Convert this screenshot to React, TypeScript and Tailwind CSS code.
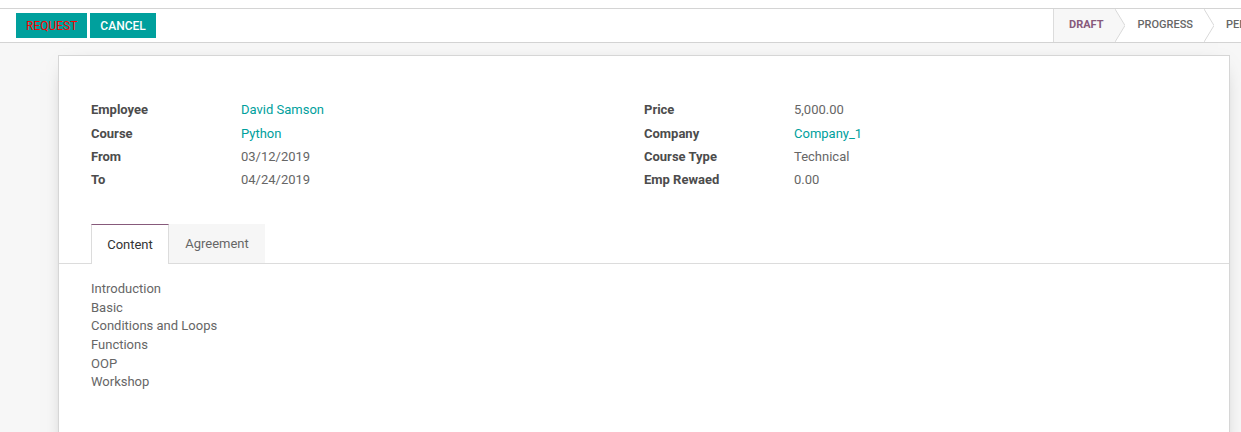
import React from "react";

function Arrow({ fill }: { fill?: string }) {
  return (
    <svg width="10" height="33" viewBox="0 0 10 33" className="block shrink-0">
      {fill ? <polygon points="0,0 10,16.5 0,33" fill={fill} /> : null}
      <polyline points="0,0 10,16.5 0,33" fill="none" stroke="#d9d9d9" strokeWidth="1" />
    </svg>
  );
}

function Row({ label, value, link }: { label: string; value: string; link?: boolean }) {
  return (
    <div className="grid grid-cols-[150px_1fr] h-[23.33px] items-center">
      <div className="font-bold text-[#4c4c4c]">{label}</div>
      <div className={link ? "text-[#00A09D]" : "text-[#666666]"}>{value}</div>
    </div>
  );
}

export default function App() {
  return (
    <div className="w-[1241px] h-[432px] overflow-hidden bg-white font-['Roboto',sans-serif] text-[13px] leading-[18.57px]">
      <div className="h-[8px] bg-white" />
      <div className="h-[35px] border-t border-b border-[#d4d4d4] bg-white flex items-center">
        <div className="flex items-center gap-[3px] pl-[16px]">
          <button className="h-[25px] px-[10px] bg-[#00A09D] text-[#ff0000] text-[12px] leading-none uppercase">
            Request
          </button>
          <button className="h-[25px] px-[10px] bg-[#00A09D] text-white font-medium text-[12px] leading-none uppercase">
            Cancel
          </button>
        </div>
        <div className="ml-auto w-[188px] shrink-0 self-stretch overflow-hidden">
          <div className="flex h-full w-max border-l border-[#dcdcdc] text-[11px] uppercase">
            <div className="flex items-center bg-[#f7f7f7] pl-[15px] pr-[11px] font-bold text-[#875A7B]">Draft</div>
            <Arrow fill="#f7f7f7" />
            <div className="flex items-center pl-[13px] pr-[11px] font-medium text-[#666666]">Progress</div>
            <Arrow />
            <div className="flex items-center pl-[12px] pr-[11px] font-medium text-[#666666]">Pen</div>
          </div>
        </div>
      </div>
      <div className="bg-[#f7f7f7] h-[389px] pt-[12px] pl-[58px]">
        <div className="w-[1172px] h-[400px] bg-white border border-[#d6d6d6] shadow-[0_5px_20px_-12px_rgba(0,0,0,0.5)] px-[32px] pt-[43px]">
          <div className="grid grid-cols-2">
            <div>
              <Row label="Employee" value="David Samson" link />
              <Row label="Course" value="Python" link />
              <Row label="From" value="03/12/2019" />
              <Row label="To" value="04/24/2019" />
            </div>
            <div>
              <Row label="Price" value="5,000.00" />
              <Row label="Company" value="Company_1" link />
              <Row label="Course Type" value="Technical" />
              <Row label="Emp Rewaed" value="0.00" />
            </div>
          </div>
          <div className="mt-[32px] -mx-[32px] px-[32px] border-b border-[#dcdcdc] flex">
            <div className="h-[40px] -mb-px w-[78px] flex items-center justify-center bg-white border-t border-t-[#875A7B] border-x border-x-[#dcdcdc] text-[#333333]">
              Content
            </div>
            <div className="h-[39px] w-[96px] flex items-center justify-center bg-[#f6f6f6] text-[#666666]">
              Agreement
            </div>
          </div>
          <div className="pt-[16px] text-[#666666]">
            <div>Introduction</div>
            <div>Basic</div>
            <div>Conditions and Loops</div>
            <div>Functions</div>
            <div>OOP</div>
            <div>Workshop</div>
          </div>
        </div>
      </div>
    </div>
  );
}
